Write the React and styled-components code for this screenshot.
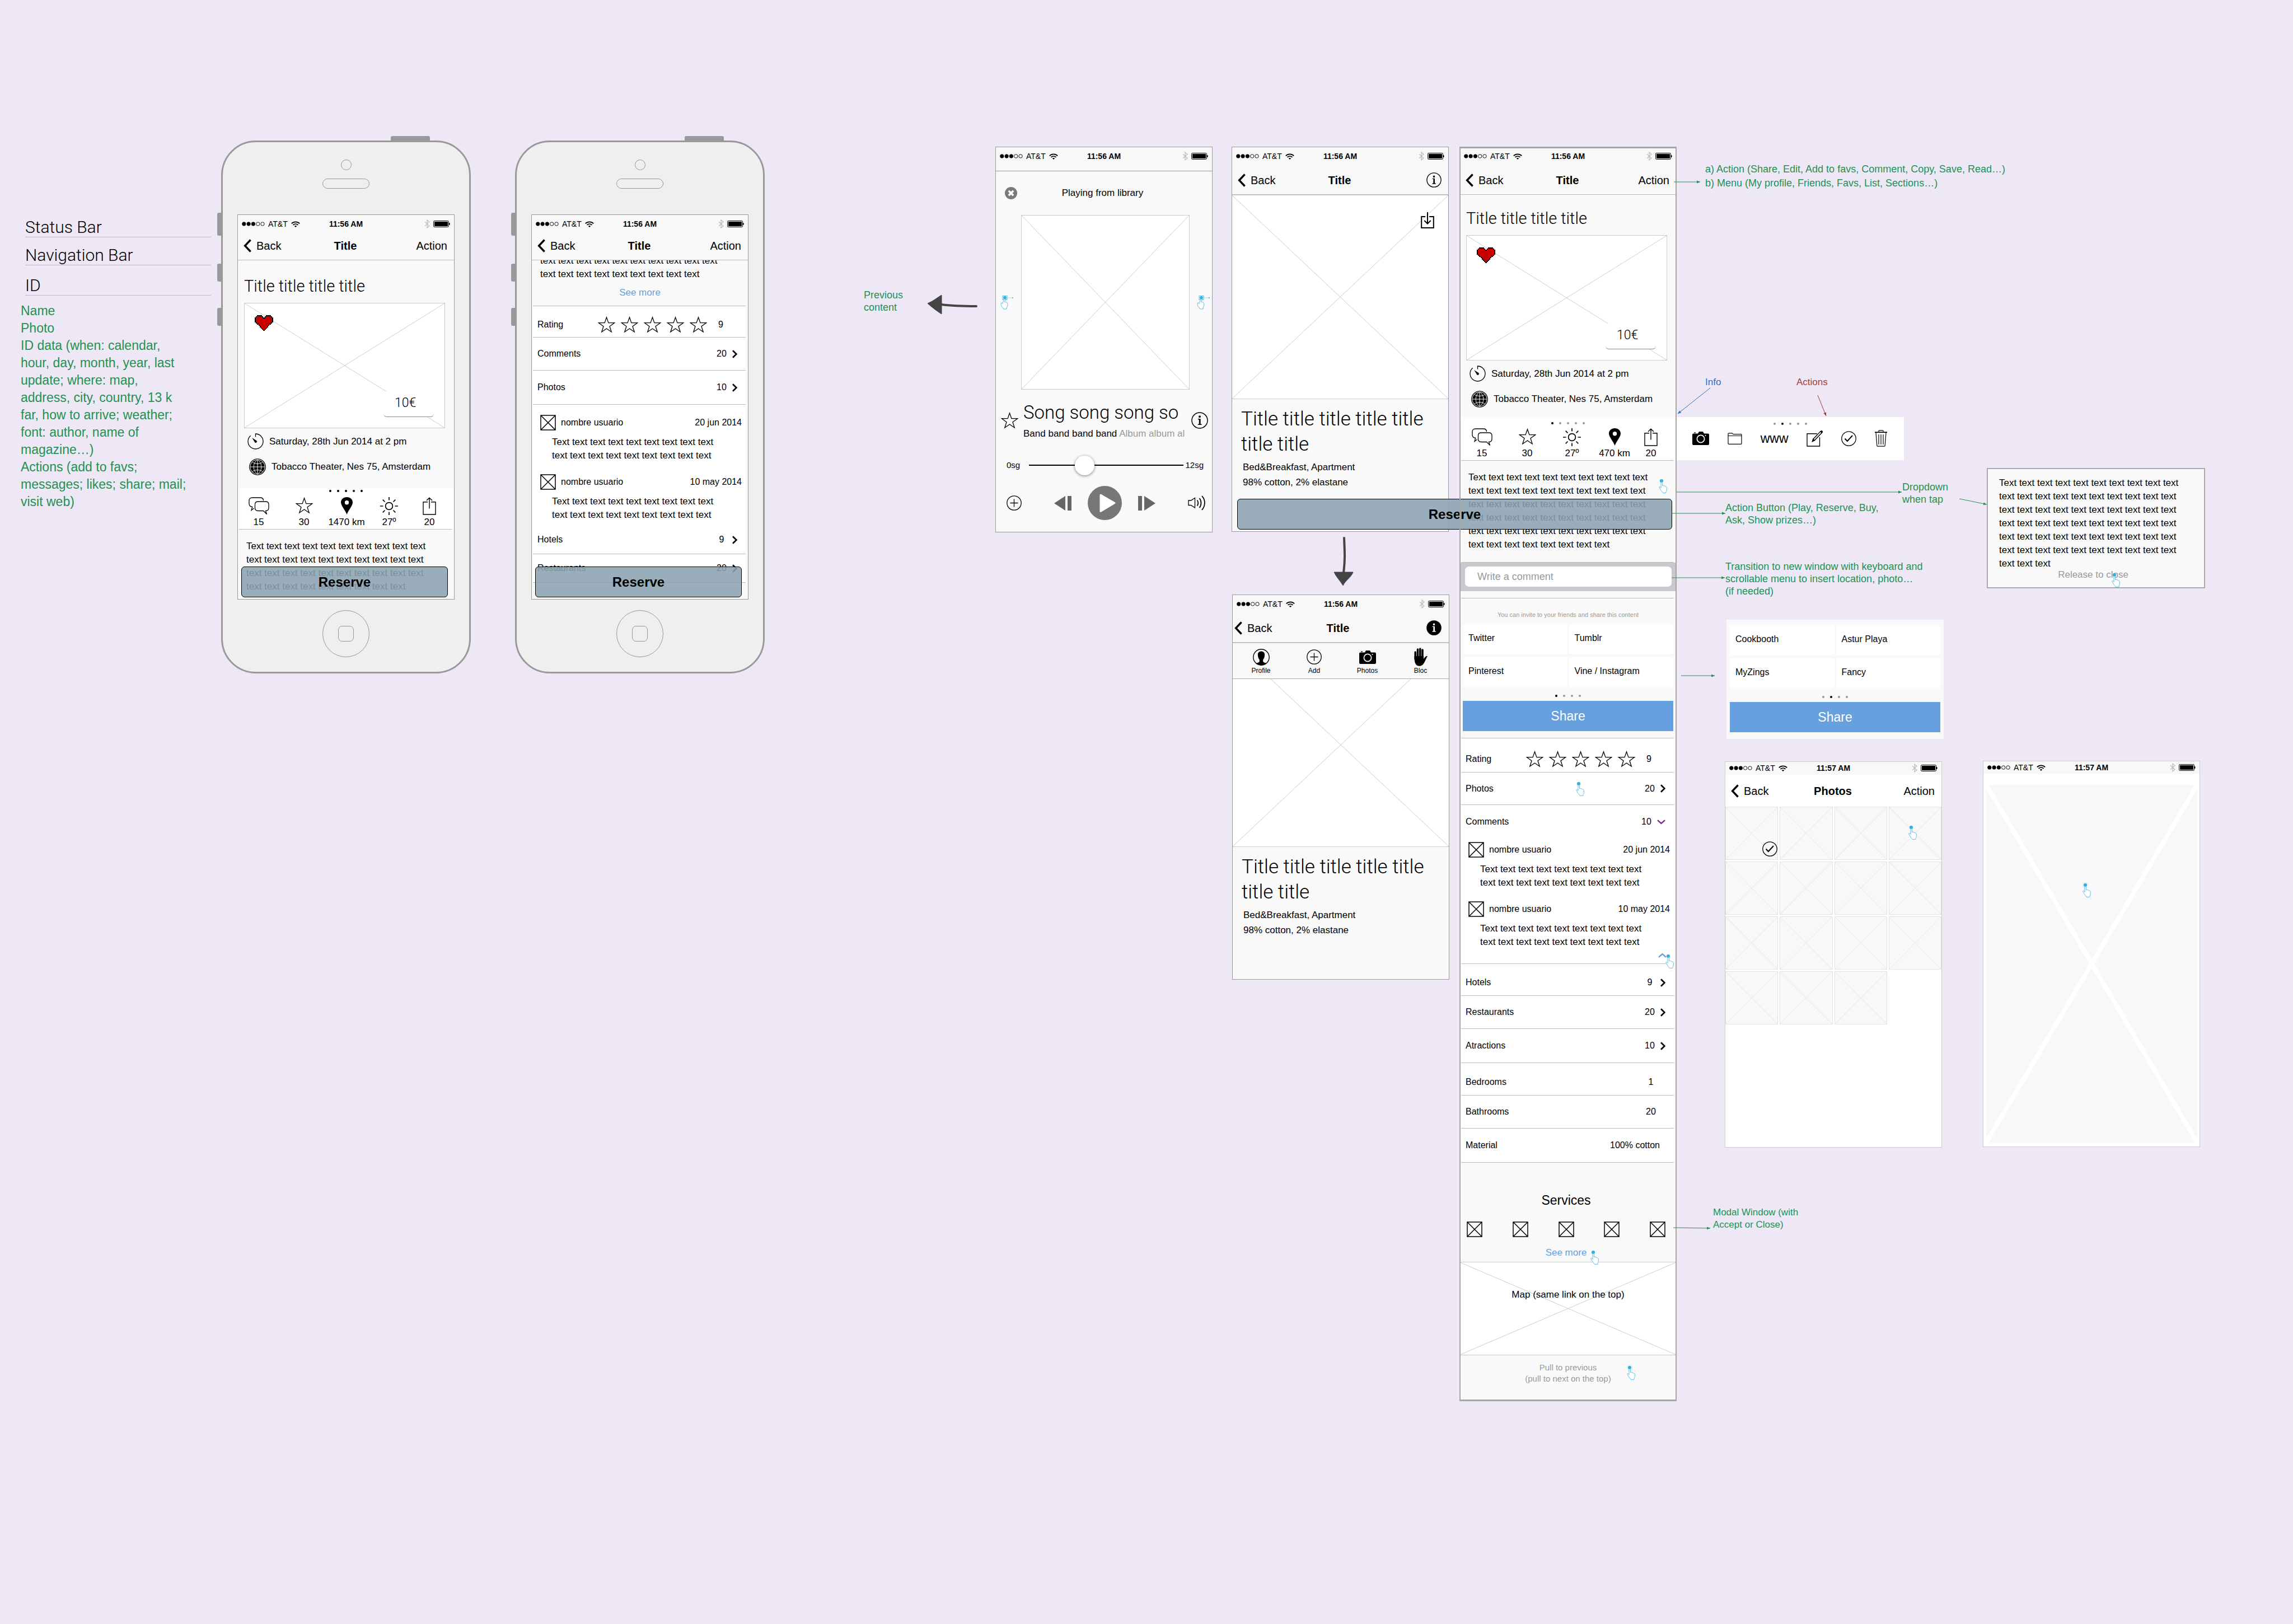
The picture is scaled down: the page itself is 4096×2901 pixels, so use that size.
import React from 'react';
import styled, { createGlobalStyle, css } from 'styled-components';

const GlobalStyle = createGlobalStyle`
  *, *::before, *::after { box-sizing: border-box; }
  body {
    margin: 0;
    background: #eee8f6;
    color: #000;
    font-family: 'Liberation Sans', Arial, Helvetica, sans-serif;
    font-size: 17px;
    line-height: 20px;
  }
  h1, h2, h3, p, ul, figure { margin: 0; padding: 0; font-weight: normal; }
  ul { list-style: none; }
  svg { display: block; flex: none; }
  a { color: inherit; text-decoration: none; }
`;

const light = css`
  font-family: Roboto, 'Liberation Sans', sans-serif;
  font-weight: 300;
`;

const plainButton = css`
  appearance: none;
  border: 0;
  padding: 0;
  margin: 0;
  background: none;
  color: inherit;
  font: inherit;
  cursor: pointer;
`;

/* ---------- canvas ---------- */

const Canvas = styled.main`
  position: relative;
  width: 100%;
  min-height: 100vh;
`;

const Pin = styled.div`
  position: absolute;
  left: ${(p) => p.$x}px;
  top: ${(p) => p.$y}px;
`;

const Wires = styled.svg`
  position: absolute;
  inset: 0;
  width: 100%;
  height: 100%;
  z-index: 4;
  pointer-events: none;
`;

const Note = styled(Pin).attrs({ as: 'p' })`
  font-size: ${(p) => (p.$small ? 17 : 18)}px;
  line-height: ${(p) => (p.$loose ? 25 : 22)}px;
  color: ${(p) => p.$color || '#239150'};
  white-space: pre;
`;

const Legend = styled(Pin)`
  width: 340px;
`;

const LegendRow = styled.h2`
  ${light}
  margin: ${(p) => p.$gap || 0}px 0 0 8px;
  border-bottom: 1px solid #bbb;
  font-size: 30px;
  line-height: 34px;
`;

const LegendText = styled.p`
  margin-top: 12px;
  font-size: 23px;
  line-height: 31px;
  color: #239150;
  white-space: pre;
`;

/* ---------- device ---------- */

const Device = styled(Pin)`
  width: 446px;
  height: 952px;
  display: flex;
  flex-direction: column;
  align-items: center;
  border: 3px solid #999;
  border-radius: 62px;
  background: #efefef;
`;

const SideKey = styled.span`
  position: absolute;
  left: -10px;
  top: ${(p) => p.$top}px;
  width: 8px;
  height: ${(p) => p.$h}px;
  border-radius: 3px 0 0 3px;
  background: #999;
`;

const PowerKey = styled.span`
  position: absolute;
  right: 70px;
  top: -11px;
  width: 70px;
  height: 9px;
  border-radius: 3px 3px 0 0;
  background: #999;
`;

const Camera = styled.span`
  width: 19px;
  height: 19px;
  margin-top: 31px;
  border: 1px solid #999;
  border-radius: 50%;
`;

const Speaker = styled.span`
  width: 84px;
  height: 18px;
  margin: 15px 0 46px;
  border: 1px solid #999;
  border-radius: 9px;
`;

const HomeKey = styled.button.attrs({ type: 'button', 'aria-label': 'Home' })`
  ${plainButton}
  width: 84px;
  height: 84px;
  margin-top: 19px;
  display: grid;
  place-items: center;
  border: 1px solid #999;
  border-radius: 50%;
  &::after {
    content: '';
    width: 28px;
    height: 28px;
    border: 1px solid #999;
    border-radius: 7px;
  }
`;

const screenBase = css`
  width: 388px;
  display: flex;
  flex-direction: column;
  background: ${(p) => (p.$white ? '#fff' : '#f9f9f9')};
  &::after {
    content: '';
    position: absolute;
    inset: 0;
    border: 1px solid ${(p) => (p.$faint ? '#ccc' : '#999')};
    pointer-events: none;
  }
`;

const Screen = styled.section`
  position: relative;
  height: 688px;
  overflow: hidden;
  ${screenBase}
`;

const Board = styled(Pin).attrs({ as: 'section' })`
  min-height: ${(p) => p.$h}px;
  ${screenBase}
`;

const LongBoard = styled(Board)`
  &::after {
    border: 2px solid #a6a6a6;
    border-width: 3px 2px;
    z-index: 3;
  }
`;

/* ---------- status and navigation ---------- */

const Status = styled.div`
  position: relative;
  flex: none;
  height: ${(p) => (p.$thin ? 24 : 34)}px;
  padding: 0 8px;
  display: grid;
  grid-template-columns: 1fr auto 1fr;
  align-items: center;
  font-size: 14px;
  line-height: 16px;
  background: #f8f8f8;
  strong { font-weight: 700; }
`;

const StatusSide = styled.span`
  display: flex;
  align-items: center;
  gap: 6px;
  justify-content: ${(p) => (p.$end ? 'flex-end' : 'flex-start')};
`;

const Nav = styled.nav`
  flex: none;
  height: ${(p) => p.$h || 52}px;
  padding: ${(p) => (p.$tight ? '0 14px 0 4px' : '0 13px 0 11px')};
  padding-bottom: ${(p) => (p.$h === 48 ? 4 : 0)}px;
  display: grid;
  grid-template-columns: 1fr auto 1fr;
  align-items: center;
  border-bottom: ${(p) => (p.$open ? 0 : 1)}px solid #bbb;
  background: ${(p) => (p.$open ? '#fff' : '#f8f8f8')};
  font-size: 20px;
  line-height: 24px;
  h1 { font-size: 20px; font-weight: 700; }
`;

const NavButton = styled.button.attrs({ type: 'button' })`
  ${plainButton}
  display: flex;
  align-items: center;
  gap: 9px;
  justify-self: ${(p) => (p.$end ? 'end' : 'start')};
`;

/* ---------- content blocks ---------- */

const Scroll = styled.div`
  flex: 1;
  min-height: 0;
  display: flex;
  flex-direction: column;
  overflow: hidden;
`;

const Photo = styled.figure`
  position: relative;
  flex: ${(p) => (p.$fill ? '1' : 'none')};
  height: ${(p) => (p.$h ? `${p.$h}px` : 'auto')};
  border: ${(p) => (p.$bare ? 0 : 1)}px solid ${(p) => p.$line || '#ccc'};
  background: ${(p) => p.$bg || '#fff'};
`;

const CrossSvg = styled.svg`
  position: absolute;
  inset: 0;
  width: 100%;
  height: 100%;
`;

const Over = styled.span`
  position: absolute;
  z-index: 1;
  ${(p) => p.$at}
`;

const Headline = styled.div`
  padding: ${(p) => (p.$phone ? '28px 17px 23px 12px' : '24px 17px 17px 12px')};
  h2 {
    ${light}
    font-size: 29px;
    line-height: 36px;
    margin-bottom: 12px;
  }
`;

const Price = styled.span`
  ${light}
  position: absolute;
  right: 19px;
  bottom: 19px;
  width: 90px;
  height: 46px;
  padding: 5px 20px;
  border-bottom: 1px solid #888;
  border-radius: 0 0 6px 6px;
  background: #fff;
  font-size: 23px;
  line-height: 32px;
`;

const Fact = styled.p`
  display: flex;
  align-items: center;
  gap: 10px;
  margin: ${(p) => (p.$second ? '16px 0 0 9px' : '9px 0 0 6px')};
`;

const Band = styled.div`
  padding: ${(p) => (p.$phone ? 3 : 9)}px 0 2px;
  background: #fff;
`;

const Stats = styled.ul`
  display: grid;
  grid-template-columns: ${(p) => p.$cols};
  margin-top: ${(p) => (p.$phone ? 9 : 7)}px;
  li { display: flex; flex-direction: column; align-items: center; white-space: nowrap; }
`;

const StatIcon = styled.span`
  height: 35px;
  display: flex;
  align-items: flex-start;
`;

const DotRow = styled.div`
  display: flex;
  justify-content: center;
  gap: 10px;
`;

const Dot = styled.i`
  width: 4px;
  height: 4px;
  border-radius: 50%;
  background: ${(p) => (p.$on ? '#000' : '#999')};
`;

const Divider = styled.hr`
  flex: none;
  border: 0;
  height: 1px;
  margin: ${(p) => p.$gap || 0}px 5px 0 3px;
  background: #bbb;
`;

const Copy = styled.p`
  position: relative;
  padding: ${(p) => p.$pad};
  margin-top: ${(p) => (p.$scrolled ? -11 : 0)}px;
  line-height: 24px;
  white-space: pre;
`;

const ReserveButton = styled.button.attrs({ type: 'button' })`
  ${plainButton}
  position: absolute;
  z-index: 2;
  height: 55px;
  border: 1px solid #000;
  border-radius: 6px;
  background: rgba(139, 162, 178, 0.88);
  font-size: 24px;
  font-weight: 700;
  ${(p) => (p.$wide
    ? css`left: 2210px; top: 891px; width: 777px;`
    : css`left: 7px; right: 12px; bottom: 4px;`)}
`;

const More = styled.a.attrs({ href: '#more' })`
  display: block;
  text-align: center;
  color: #64a0dc;
`;

const List = styled.div`
  margin: 0 5px 0 3px;
  background: #fff;
`;

const Row = styled.div`
  height: ${(p) => p.$h}px;
  padding: ${(p) => p.$drop || 0}px ${(p) => p.$end || 15}px 0 8px;
  display: flex;
  align-items: center;
  gap: 10px;
  border-top: ${(p) => (p.$line ? 1 : 0)}px solid #bbb;
  font-size: 16px;
`;

const Value = styled.span`
  min-width: 18px;
  margin-left: auto;
  text-align: center;
`;

const StarRow = styled.span`
  display: flex;
  gap: 10px;
  margin: 0 10px 0 auto;
  & + ${Value} { min-width: 0; margin: 0; }
`;

const Comment = styled.article`
  padding: 6px 7px ${(p) => (p.$last ? 7 : 15)}px 13px;
  header { display: flex; align-items: center; gap: 9px; font-size: 16px; margin-bottom: 9px; }
  time { margin-left: auto; }
  p { margin-left: 21px; line-height: 24px; white-space: pre; }
`;

const FoldRow = styled.div`
  height: 19px;
  display: flex;
  justify-content: flex-end;
  padding-right: 13px;
`;

const CommentBar = styled.form`
  height: 51px;
  margin-bottom: 12px;
  padding: 7px 9px 8px 10px;
  display: flex;
  background: #c9c8ce;
`;

const CommentInput = styled.input`
  flex: 1;
  min-width: 0;
  border: 0;
  border-radius: 7px;
  padding: 0 22px;
  background: #fff;
  font: inherit;
  font-size: 18px;
  &::placeholder { color: #999; opacity: 1; }
`;

const Invite = styled.p`
  margin: 19px 0 7px;
  text-align: center;
  font-size: 11px;
  color: #999;
`;

const SharePad = styled.div`
  padding: ${(p) => (p.$top ? 10 : 0)}px 6px 12px;
`;

const Networks = styled.div`
  display: grid;
  grid-template-columns: 1fr 1fr;
  gap: 6px 3px;
  margin-bottom: 14px;
`;

const Network = styled.button.attrs({ type: 'button' })`
  ${plainButton}
  height: 53px;
  padding: 0 10px 4px;
  background: #fff;
  font-size: 16px;
  text-align: left;
`;

const ShareButton = styled.button.attrs({ type: 'button' })`
  ${plainButton}
  width: 100%;
  height: 54px;
  margin-top: 7px;
  background: #66a0de;
  color: #fff;
  font-size: 23px;
`;

const Services = styled.div`
  padding: 53px 20px 6px 13px;
  h2 { text-align: center; font-size: 23px; line-height: 28px; }
`;

const ServiceRow = styled.div`
  display: flex;
  justify-content: space-between;
  margin: 24px 0 18px;
`;

const MapLabel = styled.figcaption`
  position: relative;
  padding-top: 48px;
  text-align: center;
`;

const Pull = styled.p`
  padding: 12px 0 30px;
  text-align: center;
  font-size: 15px;
  color: #999;
`;

const Lead = styled.div`
  padding: 13px 17px;
  h2 {
    ${light}
    font-size: 35px;
    line-height: 45px;
    white-space: pre;
  }
  p { margin: 5px 3px; line-height: 27px; white-space: pre; }
`;

const Tools = styled.div`
  position: absolute;
  inset: 0 0 auto;
  height: 64px;
  padding: 7px 3px 0;
  display: grid;
  grid-template-columns: repeat(4, 1fr);
  border-bottom: 1px solid #aaa;
  background: #f8f8f8;
`;

const Tool = styled.button.attrs({ type: 'button' })`
  ${plainButton}
  display: flex;
  flex-direction: column;
  align-items: center;
  font-size: 12px;
  line-height: 14px;
  span { height: 35px; display: flex; align-items: center; }
`;

/* ---------- player ---------- */

const StatusRule = styled.div`
  padding-bottom: 9px;
  border-bottom: 1px solid #999;
  background: #f8f8f8;
`;

const PlayerTop = styled.div`
  height: 78px;
  padding: 0 22px 0 17px;
  display: grid;
  grid-template-columns: 1fr auto 1fr;
  align-items: center;
`;

const ArtRow = styled.div`
  display: flex;
  align-items: center;
  justify-content: space-between;
  padding: 0 5px 0 9px;
  figure { width: 301px; }
`;

const IconButton = styled.button.attrs({ type: 'button' })`
  ${plainButton}
`;

const Track = styled.div`
  padding: 21px 8px 0 10px;
  display: flex;
  align-items: center;
  gap: 9px;
`;

const TrackText = styled.div`
  flex: 1;
  min-width: 0;
  overflow: hidden;
  white-space: nowrap;
  h2 {
    ${light}
    font-size: 33px;
    line-height: 40px;
    margin-bottom: 8px;
  }
  span { color: #999; }
`;

const Seek = styled.label`
  display: grid;
  grid-template-columns: 40px 1fr 36px;
  align-items: center;
  margin-top: 28px;
  padding: 0 16px 0 20px;
  font-size: 15px;
  span:last-child { text-align: right; }
`;

const Range = styled.input.attrs({ type: 'range' })`
  appearance: none;
  width: 100%;
  height: 36px;
  margin: 0;
  background: linear-gradient(#000, #000) center / 100% 2px no-repeat;
  &::-webkit-slider-thumb {
    appearance: none;
    width: 35px;
    height: 35px;
    border-radius: 50%;
    background: #fff;
    box-shadow: 0 1px 5px rgba(0, 0, 0, 0.5);
  }
`;

const Controls = styled.div`
  display: flex;
  align-items: center;
  justify-content: space-between;
  margin-top: 19px;
  padding: 0 12px 0 20px;
`;

const Transport = styled.div`
  display: flex;
  align-items: center;
  gap: 29px;
`;

/* ---------- side panels ---------- */

const ActionPanel = styled(Pin)`
  width: 406px;
  height: 77px;
  padding-top: 10px;
  background: #fff;
`;

const ActionRow = styled.div`
  height: 44px;
  margin: 2px 30px 0 28px;
  display: flex;
  align-items: center;
  justify-content: space-between;
  font-size: 23px;
`;

const Popover = styled(Pin)`
  width: 390px;
  height: 215px;
  padding: 13px 20px;
  border: 2px solid #aaa;
  background: #f9f9f9;
`;

const Release = styled.p`
  margin-right: 10px;
  text-align: center;
  line-height: 16px;
  color: #999;
`;

const ShareBoard = styled(Pin)`
  width: 388px;
  background: #f9f9f9;
`;

const Gallery = styled.div`
  display: grid;
  grid-template-columns: repeat(4, 1fr);
  gap: 3px;
  padding: 0 1px;
`;

const Viewer = styled.div`
  flex: 1;
  display: flex;
  flex-direction: column;
  padding: 19px 5px 8px 6px;
`;

/* ---------- drawings ---------- */

const Cross = ({ color = '#ccc', w = 1 }) => (
  <CrossSvg viewBox="0 0 100 100" preserveAspectRatio="none" aria-hidden="true">
    <path d="M0 0L100 100M100 0L0 100" stroke={color} strokeWidth={w} vectorEffect="non-scaling-stroke" />
  </CrossSvg>
);

const Icon = ({ w, h, box, children, sw = 1.5, fill = 'none', stroke = '#000' }) => (
  <svg width={w} height={h} viewBox={box || `0 0 ${w} ${h}`} fill={fill} stroke={stroke} strokeWidth={sw} aria-hidden="true">
    {children}
  </svg>
);

const BoxX = () => (
  <Icon w={28} h={28}>
    <path d="M1 1H27V27H1ZM1 1L27 27M27 1L1 27" />
  </Icon>
);

const Star = () => (
  <Icon w={31} h={30} sw={1.3}>
    <path d="M15.5 1.8L18.9 11.7H29.6L21 17.9L24.2 28L15.5 22L6.8 28L10 17.9L1.4 11.7H12.1Z" />
  </Icon>
);

const BackArrow = () => (
  <Icon w={14} h={24} sw={3.4}>
    <path d="M12.6 1.5L2.6 12L12.6 22.5" />
  </Icon>
);

const Next = () => (
  <Icon w={9} h={15} sw={2.6}>
    <path d="M1 1.2L7.4 7.5L1 13.8" />
  </Icon>
);

const Fold = ({ color, up }) => (
  <Icon w={15} h={9} sw={2.4} stroke={color}>
    <path d={up ? 'M1 7.8L7.5 2L14 7.8' : 'M1 1.2L7.5 7L14 1.2'} />
  </Icon>
);

const Wifi = () => (
  <Icon w={16} h={11} sw={1.8}>
    <path d="M.8 4.3C4.8.4 11.2.4 15.2 4.3M3.5 6.9C6.1 4.5 9.9 4.5 12.5 6.9" />
    <path d="M8 10.9L5.7 8.7C7 7.7 9 7.7 10.3 8.7Z" fill="#000" stroke="none" />
  </Icon>
);

const Bluetooth = () => (
  <Icon w={10} h={16} sw={1.2} stroke="#bbb">
    <path d="M1 4.3L9 11.5L5 15V1L9 4.5L1 11.7" />
  </Icon>
);

const Battery = () => (
  <Icon w={30} h={12} sw={1}>
    <rect x=".5" y=".5" width="27" height="11" rx="1.8" />
    <rect x="2" y="2" width="24" height="8" fill="#000" stroke="none" />
    <path d="M28.6 4.2Q29.8 6 28.6 7.8Z" fill="#000" />
  </Icon>
);

const Signal = () => (
  <Icon w={41} h={8} sw={0.9}>
    {[3.8, 12.1, 20.4, 28.7, 37].map((x, i) => (
      <circle key={x} cx={x} cy="4" r="3.2" fill={i < 3 ? '#000' : 'none'} />
    ))}
  </Icon>
);

const Chat = () => (
  <Icon w={37} h={32} sw={1.3}>
    <path d="M9.5 20L5 23.5L6.8 17.5C3 17 1 15 1 12V6C1 3 3 1 6.5 1H21C24.5 1 26.5 3 26.5 6.2" />
    <path d="M17 8H30.5C34 8 36 10 36 13V19C36 22.5 34 24.5 30.5 24.5L32.5 30.5L26.5 24.5H17C13.5 24.5 11.5 22.5 11.5 19V13C11.5 10 13.5 8 17 8Z" />
  </Icon>
);

const MapPin = () => (
  <Icon w={21} h={31} fill="#000" stroke="none">
    <path fillRule="evenodd" d="M10.5 0C16.5 0 21 4 21 9.5C21 15.5 13.5 23 10.5 31C7.5 23 0 15.5 0 9.5C0 4 4.5 0 10.5 0ZM10.5 6A3.7 3.7 0 1 0 10.5 13.4A3.7 3.7 0 0 0 10.5 6Z" />
  </Icon>
);

const Sun = () => (
  <Icon w={32} h={32} sw={1.7}>
    <circle cx="16" cy="16" r="6.4" />
    <path d="M16 0V5.5M16 26.5V32M0 16H5.5M26.5 16H32M4.7 4.7L8.5 8.5M23.5 23.5L27.3 27.3M27.3 4.7L23.5 8.5M8.5 23.5L4.7 27.3" />
  </Icon>
);

const ShareIcon = () => (
  <Icon w={24} h={32} sw={1.4}>
    <path d="M9 8.8H1V31H23V8.8H15M12 20.5V1.4M7 6L12 1.2L17 6" />
  </Icon>
);

const Download = () => (
  <Icon w={24} h={29} sw={2}>
    <path d="M8 8H1.2V28H22.8V8H15M12 0V20.6M6.3 15L12 20.6L17.7 15" />
  </Icon>
);

const Timer = () => (
  <Icon w={29} h={29} sw={1.3}>
    <path d="M14.5 6.5V1C22 1 28 7 28 14.5S22 28 14.5 28S1 22 1 14.5C1 10.3 2.8 6.8 5.7 4.3" />
    <path d="M8.3 8L16.4 13.2A2 2 0 0 1 13.2 16.2Z" fill="#000" stroke="none" />
  </Icon>
);

const Globe = () => (
  <Icon w={30} h={30} sw={1.3}>
    <circle cx="15" cy="15" r="14.2" />
    <circle cx="15" cy="15" r="12.6" fill="#000" stroke="none" />
    <g stroke="#f9f9f9" strokeWidth="1">
      <path d="M15 2V28M2 15H28M5.5 6.5C11 10.4 19 10.4 24.5 6.5M5.5 23.5C11 19.6 19 19.6 24.5 23.5" />
      <path d="M15 2C6 8 6 22 15 28M15 2C24 8 24 22 15 28" />
    </g>
  </Icon>
);

const heartRows = [
  '..XXXX...XXXX..',
  '.XRRRRX.XRRRRX.',
  'XRRRRRRXRRRRRRX',
  'XRRRRRRRRRRRRRX',
  'XRRRRRRRRRRRRRX',
  'XRRRRRRRRRRRRRX',
  '.XRRRRRRRRRRRX.',
  '..XRRRRRRRRRX..',
  '...XRRRRRRRX...',
  '....XRRRRRX....',
  '.....XRRRX.....',
  '......XRX......',
  '.......X.......',
];

const Heart = () => (
  <svg width="33" height="28" viewBox="0 0 15 13" preserveAspectRatio="none" shapeRendering="crispEdges" aria-hidden="true">
    {heartRows.flatMap((row, y) =>
      [...row].map((c, x) =>
        c === '.' ? null : <rect key={`${x}-${y}`} x={x} y={y} width="1" height="1" fill={c === 'X' ? '#000' : '#c80000'} />
      )
    )}
  </svg>
);

const Info = ({ size = 30, solid }) => (
  <Icon w={size} h={size} box="0 0 30 30" sw={1.5}>
    <circle cx="15" cy="15" r="14" fill={solid ? '#000' : 'none'} />
    <g fill={solid ? '#fff' : '#000'} stroke="none">
      <circle cx="15" cy="8.2" r="2" />
      <path d="M12 12H16.6V21.5H18.6V23H11.8V21.5H13.8V13.4H12Z" />
    </g>
  </Icon>
);

const Plus = ({ size = 27 }) => (
  <Icon w={size} h={size} box="0 0 27 27" sw={1.3}>
    <circle cx="13.5" cy="13.5" r="12.7" />
    <path d="M13.5 6.5V20.5M6.5 13.5H20.5" />
  </Icon>
);

const Close = () => (
  <Icon w={22} h={22} stroke="#fff" sw={3.6}>
    <circle cx="11" cy="11" r="11" fill="#7a7a7a" stroke="none" />
    <path d="M6.8 6.8L15.2 15.2M15.2 6.8L6.8 15.2" />
  </Icon>
);

const Step = ({ back }) => (
  <Icon w={31} h={26} fill="#666" stroke="none">
    <path d={back ? 'M0 13L20 0V26ZM24 0H31V26H24Z' : 'M31 13L11 0V26ZM0 0H7V26H0Z'} />
  </Icon>
);

const Play = () => (
  <Icon w={61} h={61} fill="#777" stroke="none">
    <circle cx="30.5" cy="30.5" r="30.5" />
    <path d="M23 16L48 30.5L23 45.5Z" fill="#fff" stroke="#fff" strokeWidth="3" strokeLinejoin="round" />
  </Icon>
);

const Volume = () => (
  <Icon w={32} h={27} sw={1.3}>
    <path d="M1 9H5.5L12.5 4.5V22L5.5 17.5H1Z" />
    <path d="M16.5 8.5C18.8 11 18.8 15.8 16.5 18.5M20.5 5C24.5 9.5 24.5 17.5 20.5 22M25 1.2C31.5 7.5 31.5 19 25 25.8" strokeWidth="1.8" />
  </Icon>
);

const CameraIcon = ({ bg = '#fff' }) => (
  <Icon w={30} h={24} fill="#000" stroke="none">
    <path d="M2 3.5H10L12 0H19L21 3.5H28Q30 3.5 30 5.5V22Q30 24 28 24H2Q0 24 0 22V5.5Q0 3.5 2 3.5ZM3 1.3H6V2.4H3Z" />
    <circle cx="15" cy="13" r="6.6" stroke={bg} strokeWidth="1.7" />
    <circle cx="23.5" cy="7" r="1" fill={bg} />
  </Icon>
);

const Folder = () => (
  <Icon w={26} h={21} sw={1.2}>
    <path d="M1 5.5V2Q1 .8 2.2 .8H8L10 2.6H24Q25 2.6 25 3.6V19Q25 20.3 24 20.3H2Q1 20.3 1 19V5.5H25" />
  </Icon>
);

const Edit = () => (
  <Icon w={29} h={29} sw={1.4}>
    <path d="M19 5.7H1V28H23.5V12" />
    <path d="M10.8 19L12 15.2L25 1.6L27.6 3.8L14.4 17.6Z" />
    <path d="M10.4 19.6L12 15.4L14.4 17.6ZM25 2L27 .4L28.6 2L27.4 4Z" fill="#000" />
  </Icon>
);

const Check = () => (
  <Icon w={27} h={27} sw={1.3}>
    <circle cx="13.5" cy="13.5" r="12.7" />
    <path d="M6.5 13.5L10.8 18L20 8" strokeWidth="2" />
  </Icon>
);

const Trash = () => (
  <Icon w={22} h={30} sw={1.2}>
    <path d="M7 3.5V1.8Q7 .8 8 .8H14Q15 .8 15 1.8V3.5M2 5L3.8 28Q4 29.2 5 29.2H17Q18 29.2 18.2 28L20 5M7 8V26M11 8V26M15 8V26" />
    <path d="M0 4.2H22" strokeWidth="1.8" />
  </Icon>
);

const Profile = () => (
  <Icon w={30} h={30} sw={1.4}>
    <circle cx="15" cy="15" r="14.2" />
    <path d="M15 4.5C19.6 4.5 21.6 7.5 21 11.5C21 14.5 20 17.5 18.2 19.5V22.5C19 25 22.5 24.6 24 26C19 30.3 11 30.3 6 26C7.5 24.6 11 25 11.8 22.5V19.5C10 17.5 9 14.5 9 11.5C8.4 7.5 10.4 4.5 15 4.5Z" fill="#000" stroke="none" />
  </Icon>
);

const Palm = () => (
  <Icon w={24} h={33} stroke="#000" sw={3.5}>
    <path d="M2.2 8V20M6.5 3V18M10.8 2V18M15 4V18" strokeLinecap="round" />
    <path d="M.5 15H17V20C19 17.5 20.5 14.5 24 15C21.5 18.5 20 25 16.5 29C14 33.5 6 34 3.5 30C1 27 .5 22 .5 15Z" fill="#000" stroke="none" />
  </Icon>
);

const Tap = ({ ring }) => (
  <Icon w={15} h={27} sw={0.8} stroke="#33b0dc" box="0 -2 15 27">
    {ring && <circle cx="5" cy="3.5" r="5" stroke="#c4e4f0" />}
    <circle cx="5" cy="3" r="2.8" fill="#33b0dc" />
    <path d="M4 15.5V6.3A1.2 1.2 0 0 1 6.4 6.3V11.5C7.5 10.8 8.6 11.2 9 12C10.2 11.6 11.2 12 11.6 13C12.8 12.8 14.3 13.6 14.3 15.2V18.5C14.3 21 12.8 22 12.6 24.4H7.2C6.8 22.5 4 21 3 18.5C2.2 16.6 .4 15 .8 13.8C1.8 13 3 14 4 15.5Z" fill="#fff" />
  </Icon>
);

const Drag = () => (
  <Icon w={23} h={25} sw={0.8} stroke="#33b0dc">
    <rect x="4" y=".5" width="8" height="7" />
    <circle cx="8" cy="4" r="2.6" fill="#33b0dc" />
    <path d="M12.5 4H21" strokeDasharray="1 1" />
    <circle cx="22" cy="4" r=".7" fill="#33b0dc" />
    <path d="M3.6 14.5L7 6.5A1.1 1.1 0 0 1 9 7.3L7.4 11.4C9 10.6 10 11.4 10.2 12.2C11.6 12 12.4 13 12.6 14C13.4 17.5 12.6 19 11 21.3V24H5.4L4.4 21.4C2 20 1 18 1.2 14.2C1.4 12 3 12.6 3.6 14.5Z" fill="#fff" />
  </Icon>
);

/* ---------- composed parts ---------- */

const words = (n, first) => [first ? 'Text' : 'text', ...Array(n - 1).fill('text')].join(' ');
const lines = (counts, capital = true) => counts.map((n, i) => words(n, capital && i === 0)).join('\n');

const StatusBar = ({ time = '11:56 AM', thin }) => (
  <Status $thin={thin}>
    <StatusSide><Signal /> AT&amp;T <Wifi /></StatusSide>
    <strong>{time}</strong>
    <StatusSide $end><Bluetooth /><Battery /></StatusSide>
  </Status>
);

const NavBar = ({ title = 'Title', right = 'Action', ...rest }) => (
  <Nav {...rest}>
    <NavButton><BackArrow />Back</NavButton>
    <h1>{title}</h1>
    <NavButton $end aria-label={typeof right === 'string' ? undefined : 'Info'}>{right}</NavButton>
  </Nav>
);

const Dots = ({ n = 5, on }) => (
  <DotRow>
    {Array.from({ length: n }, (_, i) => <Dot key={i} $on={on === undefined || on === i} />)}
  </DotRow>
);

const Place = ({ phone }) => (
  <Headline $phone={phone}>
    <h2>Title title title title</h2>
    <Photo $h={224}>
      <Cross />
      <Over $at="left: 18px; top: 21px;"><Heart /></Over>
      <Price>10€</Price>
    </Photo>
    <Fact><Timer />Saturday, 28th Jun 2014 at 2 pm</Fact>
    <Fact $second><Globe />Tobacco Theater, Nes 75, Amsterdam</Fact>
  </Headline>
);

const StatBand = ({ phone, items, cols, on }) => (
  <Band $phone={phone}>
    <Dots on={on} />
    <Stats $phone={phone} $cols={cols}>
      {items.map(([icon, label]) => (
        <li key={label}><StatIcon>{icon}</StatIcon>{label}</li>
      ))}
    </Stats>
  </Band>
);

const Rating = (props) => (
  <Row $end={40} {...props}>
    Rating
    <StarRow>{[1, 2, 3, 4, 5].map((n) => <Star key={n} />)}</StarRow>
    <Value>9</Value>
  </Row>
);

const LinkRow = ({ label, value, mark = <Next />, first, ...rest }) => (
  <Row as="a" href="#open" $line={!first} {...rest}>
    {label}<Value>{value}</Value>{mark}
  </Row>
);

const UserComment = ({ date, last }) => (
  <Comment $last={last}>
    <header><BoxX />nombre usuario<time>{date}</time></header>
    <p>{lines([9, 9])}</p>
  </Comment>
);

const ShareBlock = ({ names, on, top }) => (
  <SharePad $top={top}>
    <Networks>{names.map((n) => <Network key={n}>{n}</Network>)}</Networks>
    <Dots n={4} on={on} />
    <ShareButton>Share</ShareButton>
  </SharePad>
);

const Detail = ({ tools, ...rest }) => (
  <Board $h={688} {...rest}>
    <StatusBar />
    <NavBar $tight={!!tools} right={<Info size={27} solid={!!tools} />} />
    <Photo $h={365}>
      <Cross />
      {tools || <Over $at="right: 25px; top: 30px;"><Download /></Over>}
    </Photo>
    <Lead>
      <h2>{'Title title title title title\ntitle title'}</h2>
      <p>{'Bed&Breakfast, Apartment\n98% cotton, 2% elastane'}</p>
    </Lead>
  </Board>
);

const Phone = ({ x, children }) => (
  <Device $x={x} $y={251}>
    <PowerKey />
    <SideKey $top={126} $h={41} />
    <SideKey $top={217} $h={32} />
    <SideKey $top={296} $h={32} />
    <Camera />
    <Speaker />
    <Screen>
      <StatusBar />
      <NavBar $h={48} />
      <Scroll>{children}</Scroll>
      <ReserveButton>Reserve</ReserveButton>
    </Screen>
    <HomeKey />
  </Device>
);

const Player = () => (
  <Board $x={1778} $y={262} $h={689}>
    <StatusRule><StatusBar /></StatusRule>
    <PlayerTop>
      <IconButton aria-label="Close"><Close /></IconButton>
      <span>Playing from library</span>
    </PlayerTop>
    <ArtRow>
      <Drag />
      <Photo $h={312}><Cross /></Photo>
      <Drag />
    </ArtRow>
    <Track>
      <IconButton aria-label="Favourite"><Star /></IconButton>
      <TrackText>
        <h2>Song song song so</h2>
        <p>Band band band band <span>Album album al</span></p>
      </TrackText>
      <IconButton aria-label="Info"><Info /></IconButton>
    </Track>
    <Seek>
      <span>0sg</span>
      <Range defaultValue="34" aria-label="Position" />
      <span>12sg</span>
    </Seek>
    <Controls>
      <IconButton aria-label="Add"><Plus /></IconButton>
      <Transport>
        <IconButton aria-label="Previous"><Step back /></IconButton>
        <IconButton aria-label="Play"><Play /></IconButton>
        <IconButton aria-label="Next"><Step /></IconButton>
      </Transport>
      <IconButton aria-label="Volume"><Volume /></IconButton>
    </Controls>
  </Board>
);

const toolbar = (
  <Tools>
    <Tool><span><Profile /></span>Profile</Tool>
    <Tool><span><Plus /></span>Add</Tool>
    <Tool><span><CameraIcon bg="#f8f8f8" /></span>Photos</Tool>
    <Tool><span><Palm /></span>Bloc</Tool>
  </Tools>
);

const Long = () => (
  <LongBoard $x={2607} $y={262} $h={2241}>
    <StatusBar />
    <NavBar />
    <Place />
    <StatBand
      on={0}
      cols="80px 82px 78px 74px 56px"
      items={[[<Chat />, '15'], [<Star />, '30'], [<Sun />, '27º'], [<MapPin />, '470 km'], [<ShareIcon />, '20']]}
    />
    <Divider />
    <Copy $pad="18px 16px 19px">
      {lines([10, 10, 10, 10, 10, 8])}
      <Over $at="right: 17px; top: 31px;"><Tap /></Over>
    </Copy>
    <Divider />
    <CommentBar>
      <CommentInput type="text" placeholder="Write a comment" aria-label="Write a comment" />
    </CommentBar>
    <Divider />
    <Invite>You can invite to your friends and share this content</Invite>
    <ShareBlock names={['Twitter', 'Tumblr', 'Pinterest', 'Vine / Instagram']} on={0} />
    <Divider />
    <List>
      <Rating $h={60} $drop={13} />
      <LinkRow label="Photos" value="20" $h={58} />
      <LinkRow label="Comments" value="10" mark={<Fold color="#7b2d8b" />} $h={61} />
      <UserComment date="20 jun 2014" />
      <UserComment date="10 may 2014" last />
      <FoldRow><Fold color="#64a0dc" up /></FoldRow>
      <LinkRow label="Hotels" value="9" $h={57} $drop={10} />
      <LinkRow label="Restaurants" value="20" $h={59} />
      <LinkRow label="Atractions" value="10" $h={61} />
      <Row $line $h={58} $drop={10} $end={32}>Bedrooms<Value>1</Value></Row>
      <Row $line $h={59} $end={32}>Bathrooms<Value>20</Value></Row>
      <Row $line $h={61} $end={25}>Material<Value>100% cotton</Value></Row>
    </List>
    <Divider />
    <Services>
      <h2>Services</h2>
      <ServiceRow>{[1, 2, 3, 4, 5].map((n) => <BoxX key={n} />)}</ServiceRow>
      <More>See more</More>
    </Services>
    <Photo $h={167}>
      <Cross />
      <MapLabel>Map (same link on the top)</MapLabel>
    </Photo>
    <Pull>Pull to previous<br />(pull to next on the top)</Pull>
  </LongBoard>
);

const GREEN = '#239150';
const wires = [
  [2990, 325, 3037, 325, GREEN],
  [3055, 693, 2997, 739, '#2a6fb8'],
  [3247, 706, 3262, 743, '#a83232'],
  [2995, 879, 3397, 879, GREEN],
  [2987, 917, 3082, 917, GREEN],
  [3500, 891, 3549, 901, GREEN],
  [2986, 1032, 3081, 1032, GREEN],
  [3003, 1207, 3063, 1207, GREEN],
  [2989, 2193, 3055, 2194, GREEN],
];

const Wire = ({ line: [x1, y1, x2, y2, color] }) => {
  const angle = (Math.atan2(y2 - y1, x2 - x1) * 180) / Math.PI;
  return (
    <g>
      <path d={`M${x1} ${y1}L${x2} ${y2}`} stroke={color} strokeWidth="1" />
      <path d="M0 0L-6 -2.4V2.4Z" fill={color} transform={`translate(${x2} ${y2}) rotate(${angle})`} />
    </g>
  );
};

const phoneStats = [
  [<Chat />, '15'], [<Star />, '30'], [<MapPin />, '1470 km'], [<Sun />, '27º'], [<ShareIcon />, '20'],
];

export default function App() {
  return (
    <>
      <GlobalStyle />
      <Canvas>
        <Legend $x={37} $y={389}>
          <LegendRow>Status Bar</LegendRow>
          <LegendRow $gap={15}>Navigation Bar</LegendRow>
          <LegendRow $gap={19}>ID</LegendRow>
          <LegendText>
            {'Name\nPhoto\nID data (when: calendar,\nhour, day, month, year, last\nupdate; where: map,\naddress, city, country, 13 k\nfar, how to arrive; weather;\nfont: author, name of\nmagazine…)\nActions (add to favs;\nmessages; likes; share; mail;\nvisit web)'}
          </LegendText>
        </Legend>

        <Phone x={395}>
          <Place phone />
          <StatBand phone cols="76px 86px 66px 86px 58px" items={phoneStats} />
          <Divider />
          <Copy $pad="18px 16px">{lines([10, 10, 10, 9])}</Copy>
        </Phone>

        <Phone x={920}>
          <Copy $scrolled $pad="0 16px 11px">{lines([10, 9], false)}</Copy>
          <More>See more</More>
          <Divider $gap={13} />
          <List>
            <Rating $h={55} $drop={10} />
            <LinkRow label="Comments" value="20" $h={59} />
            <LinkRow label="Photos" value="10" $h={61} />
            <Row $line $h={13} />
            <UserComment date="20 jun 2014" />
            <UserComment date="10 may 2014" last />
            <LinkRow first label="Hotels" value="9" $h={50} />
            <LinkRow label="Restaurants" value="20" $h={51} />
          </List>
          <Divider />
        </Phone>

        <Player />
        <Detail $x={2200} $y={262} />
        <Detail $x={2201} $y={1062} tools={toolbar} />
        <Long />
        <ReserveButton $wide>Reserve</ReserveButton>

        <ActionPanel $x={2995} $y={745}>
          <Dots on={1} />
          <ActionRow>
            <IconButton aria-label="Camera"><CameraIcon /></IconButton>
            <IconButton aria-label="Folder"><Folder /></IconButton>
            <IconButton>www</IconButton>
            <IconButton aria-label="Edit"><Edit /></IconButton>
            <IconButton aria-label="Done"><Check /></IconButton>
            <IconButton aria-label="Delete"><Trash /></IconButton>
          </ActionRow>
        </ActionPanel>

        <Popover $x={3549} $y={836}>
          <Copy $pad="0">{lines([10, 10, 10, 10, 10, 10, 3])}</Copy>
          <Release>Release to close</Release>
        </Popover>

        <ShareBoard $x={3084} $y={1107}>
          <ShareBlock top names={['Cookbooth', 'Astur Playa', 'MyZings', 'Fancy']} on={1} />
        </ShareBoard>

        <Board $x={3081} $y={1360} $h={690} $white $faint>
          <StatusBar time="11:57 AM" thin />
          <NavBar title="Photos" $h={57} $open />
          <Gallery>
            {Array.from({ length: 15 }, (_, i) => (
              <Photo key={i} $h={95} $line="#e3e3e3" $bg="#f8f8f8">
                <Cross color="#e6e6e6" w={1} />
                {i === 0 && <Over $at="right: 0; bottom: 5px;"><Check /></Over>}
              </Photo>
            ))}
          </Gallery>
        </Board>

        <Board $x={3542} $y={1359} $h={690} $white $faint>
          <StatusBar time="11:57 AM" thin />
          <Viewer>
            <Photo $fill $bare $bg="#f8f8f8"><Cross color="#fff" w={8} /></Photo>
          </Viewer>
        </Board>

        <Note $x={1543} $y={516}>{'Previous\ncontent'}</Note>
        <Note $x={3046} $y={290} $loose>
          {'a) Action (Share, Edit, Add to favs, Comment, Copy, Save, Read…)\nb) Menu (My profile, Friends, Favs, List, Sections…)'}
        </Note>
        <Note $x={3046} $y={672} $small $color="#2a6fb8">Info</Note>
        <Note $x={3209} $y={672} $small $color="#a83a3a">Actions</Note>
        <Note $x={3398} $y={859}>{'Dropdown\nwhen tap'}</Note>
        <Note $x={3082} $y={896}>{'Action Button (Play, Reserve, Buy,\nAsk, Show prizes…)'}</Note>
        <Note $x={3082} $y={1001}>
          {'Transition to new window with keyboard and\nscrollable menu to insert location, photo…\n(if needed)'}
        </Note>
        <Note $x={3060} $y={2155} $small>{'Modal Window (with\nAccept or Close)'}</Note>

        <Pin $x={2815} $y={1395}><Tap /></Pin>
        <Pin $x={2975} $y={1703}><Tap /></Pin>
        <Pin $x={2841} $y={2232}><Tap /></Pin>
        <Pin $x={2906} $y={2438}><Tap ring /></Pin>
        <Pin $x={3409} $y={1473}><Tap /></Pin>
        <Pin $x={3720} $y={1576}><Tap ring /></Pin>
        <Pin $x={3772} $y={1022}><Tap /></Pin>

        <Wires aria-hidden="true">
          {wires.map((line) => <Wire key={line.join()} line={line} />)}
          <g fill="#444" stroke="#444">
            <path d="M1682 544C1704 547 1722 547 1744 547" fill="none" strokeWidth="4" strokeLinecap="round" />
            <path d="M1657 542C1667 538 1675 531 1682 527V561C1674 556 1666 550 1657 542Z" strokeLinejoin="round" />
            <path d="M2401 961C2402 985 2403 1000 2400 1023" fill="none" strokeWidth="4" strokeLinecap="round" />
            <path d="M2383 1022L2417 1022C2414 1031 2403 1037 2399 1046C2394 1037 2387 1031 2383 1022Z" strokeLinejoin="round" />
          </g>
        </Wires>
      </Canvas>
    </>
  );
}
